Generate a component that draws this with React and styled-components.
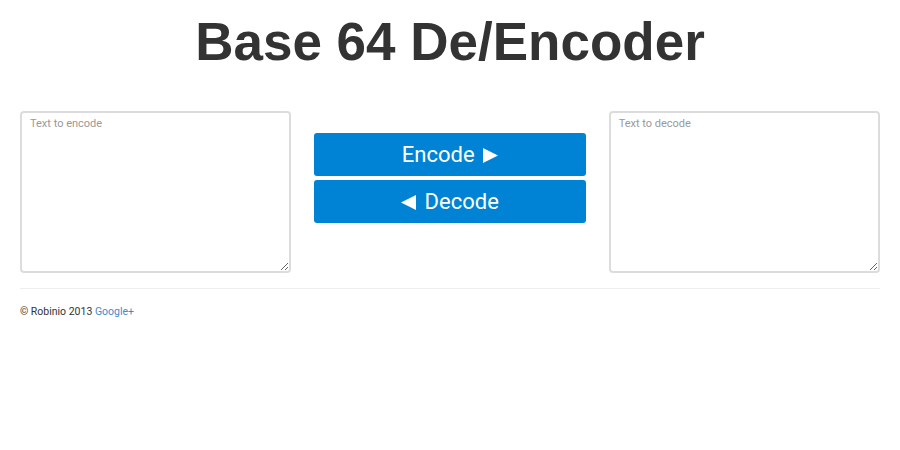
import styled, { createGlobalStyle } from 'styled-components';

const GlobalStyle = createGlobalStyle`
  body {
    margin: 0;
    background: #fff;
    font-family: Roboto, 'Liberation Sans', sans-serif;
    color: #333;
  }
`;

const Page = styled.div`
  padding: 0 20px;
`;

const Title = styled.h1`
  margin: 0;
  padding-top: 12px;
  height: 99px;
  box-sizing: border-box;
  text-align: center;
  font-family: 'Liberation Sans', Arial, sans-serif;
  font-weight: 700;
  font-size: 53px;
  line-height: 60px;
  color: #333;
`;

const Row = styled.div`
  display: grid;
  grid-template-columns: repeat(3, 1fr);
  column-gap: 23px;
  padding-top: 12px;
`;

const TextBox = styled.textarea`
  display: block;
  width: 100%;
  height: 162px;
  box-sizing: border-box;
  margin: 0;
  padding: 3px 8px;
  border: 2px solid #dcdcdc;
  border-radius: 4px;
  font-family: Roboto, 'Liberation Sans', sans-serif;
  font-size: 11px;
  line-height: 16px;
  color: #333;
  background: #fff;
  outline: none;
  resize: vertical;

  &::placeholder {
    color: #999;
  }
`;

const Actions = styled.div`
  display: flex;
  flex-direction: column;
  gap: 4px;
  padding-top: 22px;
`;

const ActionButton = styled.button`
  height: 43px;
  margin: 0;
  border: none;
  border-radius: 3px;
  background: #0083d5;
  color: #fff;
  font-family: Roboto, 'Liberation Sans', sans-serif;
  font-size: 22px;
  cursor: pointer;
`;

const Triangle = styled.svg`
  width: 15px;
  height: 15px;
  vertical-align: -1px;
  fill: currentColor;
  margin: ${(p) => (p.$left ? '0 3px 0 0' : '0 0 0 3px')};
`;

const Arrow = ({ left }) => (
  <Triangle $left={left} viewBox="0 0 15 15" aria-hidden="true">
    {left ? <polygon points="15,0 15,15 0,7.5" /> : <polygon points="0,0 15,7.5 0,15" />}
  </Triangle>
);

const Divider = styled.hr`
  margin: 15px 0 0;
  border: none;
  border-top: 1px solid #eee;
`;

const Footer = styled.footer`
  padding-top: 15px;
  font-size: 10.5px;
  line-height: 16px;
  color: #333;

  a {
    color: #428bca;
    text-decoration: none;
  }
`;

export default function App() {
  return (
    <>
      <GlobalStyle />
      <Page>
        <Title>Base 64 De/Encoder</Title>
        <Row>
          <TextBox placeholder="Text to encode" />
          <Actions>
            <ActionButton>
              Encode <Arrow />
            </ActionButton>
            <ActionButton>
              <Arrow left /> Decode
            </ActionButton>
          </Actions>
          <TextBox placeholder="Text to decode" />
        </Row>
        <Divider />
        <Footer>
          © Robinio 2013 <a href="#">Google+</a>
        </Footer>
      </Page>
    </>
  );
}
